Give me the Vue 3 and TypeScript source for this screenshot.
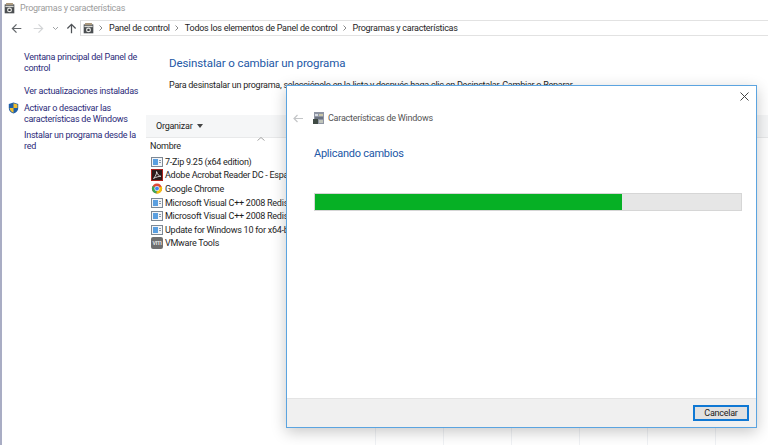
<template>
  <div class="window">
    <div class="titlebar">
      <svg class="cp-icon" width="11" height="11" viewBox="0 0 16 16">
        <rect x="1" y="2" width="14" height="13" fill="#4b4f52" />
        <rect x="3" y="0" width="10" height="3" fill="#a9977c" />
        <rect x="2" y="4" width="12" height="2" fill="#d8d8d4" />
        <circle cx="8" cy="10" r="3.600" fill="#e9e9e6" />
        <circle cx="8" cy="10" r="1.800" fill="#3d4144" />
      </svg>
      <span>Programas y características</span>
    </div>

    <div class="navbar">
      <svg class="nav-btn" width="11" height="11" viewBox="0 0 16 16">
        <path d="M15 8H2M8 2 2 8l6 6" fill="none" stroke="#63676b" stroke-width="1.800" />
      </svg>
      <svg class="nav-btn fwd" width="11" height="11" viewBox="0 0 16 16">
        <path d="M1 8h13M8 2l6 6-6 6" fill="none" stroke="#d3d5d7" stroke-width="1.800" />
      </svg>
      <svg class="nav-drop" width="7" height="5" viewBox="0 0 7 5">
        <path d="M1 1 3.500 3.500 6 1" fill="none" stroke="#a0a3a6" stroke-width="1" />
      </svg>
      <svg class="nav-btn up" width="11" height="11" viewBox="0 0 16 16">
        <path d="M8 15V2M2 8l6-6 6 6" fill="none" stroke="#4f5357" stroke-width="1.800" />
      </svg>
      <div class="address">
        <svg width="11" height="11" viewBox="0 0 16 16">
          <rect x="1" y="2" width="14" height="13" fill="#4b4f52" />
          <rect x="3" y="0" width="10" height="3" fill="#a9977c" />
          <rect x="2" y="4" width="12" height="2" fill="#d8d8d4" />
          <circle cx="8" cy="10" r="3.600" fill="#e9e9e6" />
          <circle cx="8" cy="10" r="1.800" fill="#3d4144" />
        </svg>
        <template v-for="crumb in crumbs" :key="crumb">
          <svg class="crumb-sep" width="4" height="6" viewBox="0 0 4 6">
            <path d="M.5.500 3 3 .5 5.500" fill="none" stroke="#8a8a8a" stroke-width="1" />
          </svg>
          <span class="crumb">{{ crumb }}</span>
        </template>
      </div>
    </div>

    <div class="body">
      <aside class="sidebar">
        <a class="side-link first">Ventana principal del Panel de control</a>
        <a class="side-link updates">Ver actualizaciones instaladas</a>
        <div class="shield-row">
          <svg class="shield" width="11" height="12" viewBox="0 0 14 15">
            <path d="M7 .5 13 2.500V7.500C13 11 10.500 13.300 7 14.500 3.500 13.300 1 11 1 7.500V2.500Z" fill="#1f5fa8" />
            <path d="M7 1.500 12 3V7.500H7Z" fill="#f2bf2e" />
            <path d="M7 7.500V13.400C4.500 12.400 2.200 10.500 2 7.500Z" fill="#f2bf2e" />
          </svg>
          <a class="side-link">Activar o desactivar las características de Windows</a>
        </div>
        <a class="side-link">Instalar un programa desde la red</a>
      </aside>

      <main class="content">
        <h1>Desinstalar o cambiar un programa</h1>
        <p class="intro">Para desinstalar un programa, selecciónelo en la lista y después haga clic en Desinstalar, Cambiar o Reparar.</p>
        <div class="toolbar">
          <span>Organizar</span>
          <svg width="6" height="4" viewBox="0 0 6 4"><path d="M0 0h6L3 4Z" fill="#444" /></svg>
        </div>
        <div class="col-head">
          <svg class="sort" width="8" height="4" viewBox="0 0 8 4">
            <path d="M.5 3.500 4 .5l3.500 3" fill="none" stroke="#a5a5a5" />
          </svg>
          <span>Nombre</span>
        </div>
        <ul class="list">
          <li v-for="item in programs" :key="item.name">
            <svg v-if="item.icon === 'box'" width="12" height="10" viewBox="0 0 12 10">
              <rect x=".5" y=".5" width="11" height="9" fill="#f3f5f8" stroke="#7d8894" />
              <rect x="2" y="2" width="5" height="6" fill="#5a9fe0" />
              <rect x="8" y="3" width="2" height="1" fill="#8b98a5" />
              <rect x="8" y="5" width="2" height="1" fill="#8b98a5" />
            </svg>
            <svg v-else-if="item.icon === 'acrobat'" width="12" height="12" viewBox="0 0 14 14">
              <rect x=".5" y=".5" width="13" height="13" fill="#2b1a1a" stroke="#b3140f" />
              <path d="M3 11C5 9 7 5 6.500 3 8 7 9 8 11.500 8.500 9 8.500 6 9.500 3 11Z" fill="none" stroke="#eee" stroke-width="1" />
            </svg>
            <svg v-else-if="item.icon === 'chrome'" width="11" height="11" viewBox="0 0 14 14">
              <circle cx="7" cy="7" r="6.500" fill="#dd4b39" />
              <path d="M7 7 1.400 3.800A6.500 6.500 0 0 0 6.500 13.500Z" fill="#3aa757" />
              <path d="M7 7 13 4.500A6.500 6.500 0 0 1 6.500 13.500Z" fill="#f4c20d" />
              <circle cx="7" cy="7" r="3.200" fill="#fff" />
              <circle cx="7" cy="7" r="2.400" fill="#4285f4" />
            </svg>
            <span v-else class="vm">vm</span>
            <span class="name">{{ item.name }}</span>
          </li>
        </ul>
        <div class="col-lines">
          <i v-for="n in 7" :key="n"></i>
        </div>
      </main>
    </div>

    <section class="dialog">
      <div class="dialog-top">
        <svg width="9" height="9" viewBox="0 0 9 9">
          <path d="M.5.500l8 8M8.500.500l-8 8" stroke="#444" stroke-width="1" />
        </svg>
      </div>
      <div class="dialog-head">
        <svg width="10" height="9" viewBox="0 0 10 9">
          <path d="M10 4.500H1M4.500 1 1 4.500 4.500 8" fill="none" stroke="#c4c6c8" stroke-width="1.200" />
        </svg>
        <svg class="feat-icon" width="11" height="12" viewBox="0 0 11 12">
          <rect x="1" y="0" width="10" height="12" fill="#8f95a3" />
          <rect x="2" y="2" width="3" height="2" fill="#d6dbe3" />
          <rect x="6" y="2" width="4" height="2" fill="#c9c6a8" />
          <rect x="2" y="5" width="8" height="2" fill="#6a7280" />
          <rect x="0" y="7" width="5" height="5" fill="#3f4a44" />
          <rect x="6" y="8" width="4" height="3" fill="#c0c4ba" />
        </svg>
        <span>Características de Windows</span>
      </div>
      <h2>Aplicando cambios</h2>
      <div class="progress">
        <div class="progress-fill" :style="{ width: `${progress}%` }"></div>
      </div>
      <div class="dialog-spacer"></div>
      <footer class="dialog-foot">
        <button type="button">Cancelar</button>
      </footer>
    </section>
  </div>
</template>

<script setup lang="ts">
const crumbs = ["Panel de control", "Todos los elementos de Panel de control", "Programas y características"];

const programs = [
  { name: "7-Zip 9.25 (x64 edition)", icon: "box" },
  { name: "Adobe Acrobat Reader DC - Español", icon: "acrobat" },
  { name: "Google Chrome", icon: "chrome" },
  { name: "Microsoft Visual C++ 2008 Redistributable", icon: "box" },
  { name: "Microsoft Visual C++ 2008 Redistributable", icon: "box" },
  { name: "Update for Windows 10 for x64-based", icon: "box" },
  { name: "VMware Tools", icon: "vm" },
];

const progress = 72;
</script>

<style>
html,
body {
  margin: 0;
  background: #fff;
}
</style>

<style scoped>
.window {
  position: relative;
  width: 768px;
  height: 445px;
  overflow: hidden;
  box-sizing: border-box;
  border-left: 2px solid #a9adc4;
  background: #fff;
  font-family: Roboto, "Noto Sans", sans-serif;
  font-size: 9px;
  letter-spacing: -0.25px;
  color: #1e1e1e;
}

.titlebar {
  display: flex;
  align-items: center;
  gap: 5px;
  height: 16px;
  padding-left: 2px;
  color: #9b9b9b;
}

.navbar {
  display: flex;
  align-items: center;
  height: 16px;
  margin-top: 4px;
  padding-left: 9px;
}

.nav-btn {
  flex-shrink: 0;
  margin-right: 11px;
}

.nav-btn.fwd {
  margin-right: 8px;
}

.nav-drop {
  margin-right: 7px;
}

.nav-btn.up {
  margin-right: 3px;
}

.address {
  flex: 1;
  display: flex;
  align-items: center;
  height: 16px;
  box-sizing: border-box;
  border-top: 1px solid #e2e2e2;
  border-bottom: 1px solid #e2e2e2;
  border-left: 1px solid #d9d9d9;
  padding-left: 2px;
  white-space: nowrap;
}

.crumb-sep {
  margin: 0 6px 0 5px;
}

.body {
  display: flex;
  height: 409px;
}

.sidebar {
  width: 144px;
  flex-shrink: 0;
  padding: 16px 6px 0 22px;
  box-sizing: border-box;
  display: flex;
  flex-direction: column;
}

.side-link {
  display: block;
  color: #2b2a78;
  line-height: 11px;
  margin-bottom: 5px;
}

.side-link.first {
  margin-bottom: 12px;
}

.side-link.updates {
  margin-bottom: 6px;
}

.shield-row {
  position: relative;
}

.shield {
  position: absolute;
  left: -16px;
  top: -1px;
}

.content {
  flex: 1;
  min-width: 0;
  position: relative;
}

h1 {
  margin: 0;
  padding: 19px 0 0 23px;
  font-size: 11.500px;
  font-weight: 400;
  line-height: 17px;
  letter-spacing: -0.1px;
  color: #2358a6;
}

.intro {
  margin: 0;
  padding: 7px 0 0 23px;
  line-height: 13px;
  white-space: nowrap;
}

.toolbar {
  display: flex;
  align-items: center;
  gap: 5px;
  height: 22px;
  margin-top: 23px;
  padding-left: 10px;
  background: #f5f6f7;
  border-bottom: 1px solid #e8e9ea;
}

.col-head {
  position: relative;
  height: 15px;
  padding: 1px 0 0 4px;
  line-height: 14px;
}

.sort {
  position: absolute;
  left: 111px;
  top: -1px;
}

.list {
  list-style: none;
  margin: 0;
  padding: 1px 0 0 5px;
}

.list li {
  display: flex;
  align-items: center;
  gap: 2px;
  height: 13.600px;
  white-space: nowrap;
}

.list svg {
  width: 12px;
  flex-shrink: 0;
}

.vm {
  width: 12px;
  height: 12px;
  flex-shrink: 0;
  border-radius: 2px;
  background: #6f6f6f;
  color: #fff;
  font-size: 7px;
  line-height: 12px;
  text-align: center;
}

.col-lines {
  position: absolute;
  left: 229px;
  bottom: 0;
  display: flex;
  gap: 67px;
  height: 20px;
}

.col-lines i {
  width: 1px;
  background: #f0f2f5;
}

.dialog {
  position: absolute;
  left: 284px;
  top: 85px;
  width: 471px;
  height: 343px;
  box-sizing: border-box;
  display: flex;
  flex-direction: column;
  background: #fff;
  border: 1px solid #5ba4e0;
  box-shadow: 0 4px 14px rgba(0, 0, 0, 0.22);
}

.dialog-top {
  display: flex;
  justify-content: flex-end;
  height: 15px;
  padding: 6px 7px 0 0;
}

.dialog-head {
  display: flex;
  align-items: center;
  height: 14px;
  margin-top: 4px;
  padding-left: 6px;
  color: #555;
}

.feat-icon {
  margin: 0 4px 0 10px;
}

h2 {
  margin: 0;
  padding: 21px 0 0 27px;
  font-size: 11px;
  font-weight: 400;
  line-height: 16px;
  color: #2358a6;
}

.progress {
  height: 18px;
  margin: 31px 14px 0 27px;
  box-sizing: border-box;
  border: 1px solid #d6d6d6;
  background: #e6e6e6;
}

.progress-fill {
  height: 100%;
  background: #06b025;
}

.dialog-spacer {
  flex: 1;
}

.dialog-foot {
  display: flex;
  justify-content: flex-end;
  align-items: center;
  height: 28px;
  padding-right: 7px;
  background: #f0f0f0;
  border-top: 1px solid #e4e4e4;
}

button {
  width: 56px;
  height: 16px;
  padding: 0;
  box-sizing: border-box;
  border: 1px solid #0f78d4;
  outline: 1px solid #0f78d4;
  outline-offset: -2px;
  background: #e1e1e1;
  font: 9px Roboto, "Noto Sans", sans-serif;
  letter-spacing: -0.25px;
  color: #222;
}
</style>
